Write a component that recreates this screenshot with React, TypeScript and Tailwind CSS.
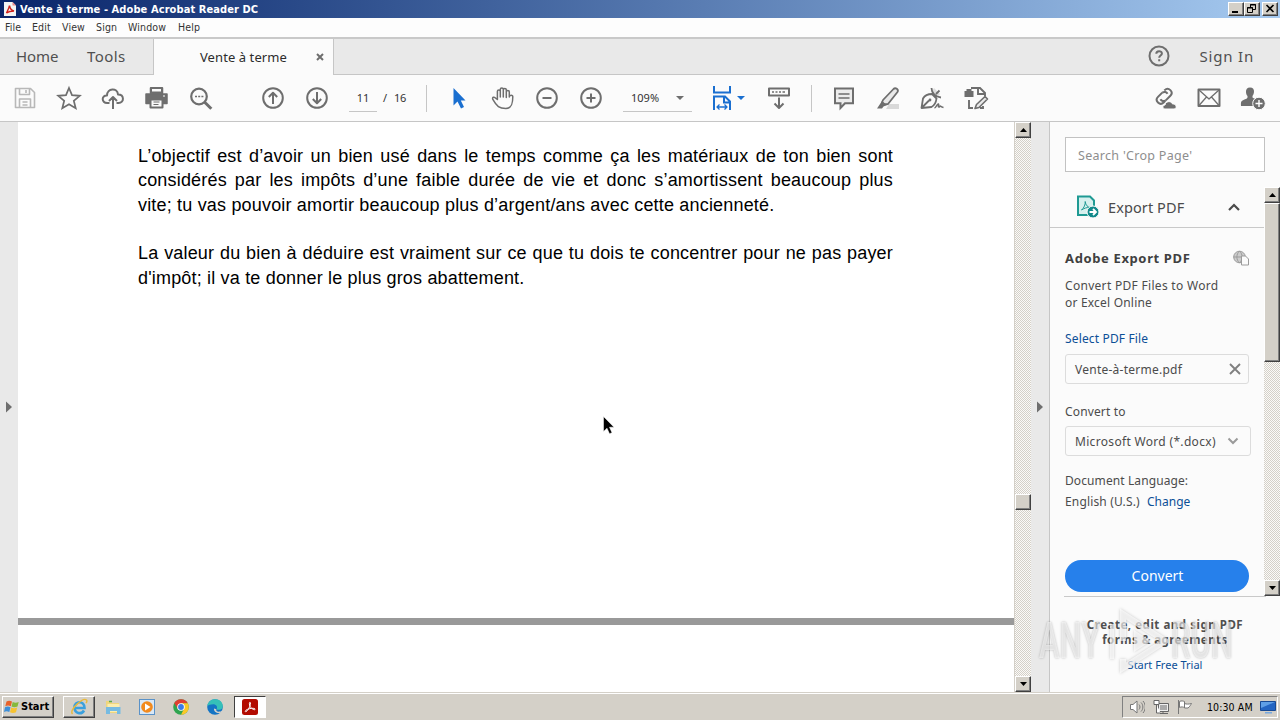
import type { ReactNode } from "react";
import clsx from "clsx";

const MENU_ITEMS = [
    { label: "File", className: "w-[27px]" },
    { label: "Edit", className: "w-[30px]" },
    { label: "View", className: "w-[34px]" },
    { label: "Sign", className: "w-[32px]" },
    { label: "Window", className: "w-[50px]" },
    { label: "Help", className: "w-[40px]" },
];

const PARAGRAPHS = [
    [
        "L’objectif est d’avoir un bien usé dans le temps comme ça les matériaux de ton bien sont",
        "considérés par les impôts d’une faible durée de vie et donc s’amortissent beaucoup plus",
        "vite; tu vas pouvoir amortir beaucoup plus d’argent/ans avec cette ancienneté.",
    ],
    [
        "La valeur du bien à déduire est vraiment sur ce que tu dois te concentrer pour ne pas payer",
        "d'impôt; il va te donner le plus gros abattement.",
    ],
];

const RAISED = "border border-t-white border-l-white border-r-[#404040] border-b-[#404040] bg-[#d4d0c8] shadow-[inset_-1px_-1px_0_#808080]";
const HATCH = "bg-[repeating-conic-gradient(#d4d0c8_0_25%,#fbfaf8_0_50%)] bg-[length:2px_2px]";

interface IconProps {
    children: ReactNode;
    className?: string;
}

/* 28x28 toolbar glyph, centred in its 44px slot */
const Icon = ({ children, className }: IconProps) => (
    <svg
        viewBox="0 0 28 28"
        className={clsx("h-7 w-7 shrink-0", className ?? "text-[#6e6e6e]")}
        fill="none"
        stroke="currentColor"
        strokeWidth="2"
        strokeLinejoin="round"
    >
        {children}
    </svg>
);

const ToolButton = ({ children, className }: IconProps) => (
    <button className="flex w-11 shrink-0 items-center justify-center">
        <Icon className={className}>{children}</Icon>
    </button>
);

const Caret = ({ className }: { className?: string }) => (
    <svg viewBox="0 0 8 4" className={clsx("h-1 w-2 shrink-0", className)}>
        <path d="M0 0h8L4 4z" fill="currentColor" />
    </svg>
);

const AcrobatLogo = ({ className }: { className?: string }) => (
    <svg viewBox="0 0 16 16" className={className}>
        <rect width="16" height="16" rx="2.5" fill="#b30b00" />
        <path
            d="M3.200 12.300c.4-1.500 3.400-2.600 6-2.900 2.300-.3 4.300.1 3.900 1-.5 1-3-.3-4.500-2.200C7.200 6.400 7 3.400 7.900 3.300c1.100-.1.600 3-.9 5.800-1.300 2.500-3.500 4.600-3.800 3.200z"
            fill="none"
            stroke="#fff"
            strokeWidth="1"
        />
    </svg>
);

const TitleBar = () => (
    <header className="flex h-[18px] shrink-0 items-center bg-linear-to-r from-[#0a246a] to-[#a6caf0] pr-[2px] pl-[4px]">
        <svg viewBox="0 0 12 14" className="h-[14px] w-3">
            <path d="M0 0h8.500L12 3.500V14H0z" fill="#f4f4f4" />
            <path d="M8.500 0v3.500H12z" fill="#e88" />
            <path d="M2.500 11c1-2 2.500-4.500 3-7.500C6 6.500 7.500 8.500 10 9 7 9 4.500 9.500 2.500 11z" fill="none" stroke="#d0201a" strokeWidth="1.500" />
        </svg>
        <h1 className="ml-[4px] flex-1 pt-px font-['DejaVu_Sans_Condensed','DejaVu_Sans',sans-serif] text-[11px] leading-[17px] font-bold tracking-[0.09px] whitespace-nowrap text-white">
            Vente à terme - Adobe Acrobat Reader DC
        </h1>
        <div className="flex h-[14px]">
            <button className={clsx("h-[14px] w-4", RAISED)}>
                <svg viewBox="0 0 14 12" className="h-3 w-[14px]">
                    <path d="M3 8h6v2H3z" />
                </svg>
            </button>
            <button className={clsx("h-[14px] w-4", RAISED)}>
                <svg viewBox="0 0 14 12" className="h-3 w-[14px]" fill="none" stroke="#000">
                    <path d="M5.500 4V1.500h5v5H8M5 2h6M2.500 4.500h5v5h-5zM2 5h6" />
                </svg>
            </button>
            <button className={clsx("ml-[2px] h-[14px] w-4", RAISED)}>
                <svg viewBox="0 0 14 12" className="h-3 w-[14px]">
                    <path d="M3.500 2l7 7M10.500 2l-7 7" stroke="#000" strokeWidth="1.600" />
                </svg>
            </button>
        </div>
    </header>
);

const MenuBar = () => (
    <nav className="flex h-[21px] shrink-0 items-center border-b-2 border-[#c9c9c9] bg-[#fdfdfd] pt-px pl-[5px] font-['DejaVu_Sans_Condensed','DejaVu_Sans',sans-serif] text-[10.500px] tracking-[0.15px] text-[#333]">
        {MENU_ITEMS.map((item) => (
            <span key={item.label} className={clsx("shrink-0 whitespace-nowrap", item.className)}>
                {item.label}
            </span>
        ))}
    </nav>
);

const TabBar = () => (
    <div className="flex h-9 shrink-0 font-['Noto_Sans',sans-serif] text-[#505050]">
        <div className="flex w-[154px] items-center border-r border-b border-[#c6c6c6] bg-[#e9e9e9] pl-4 text-[15px]">
            <span className="w-[71px] tracking-[-0.1px]">Home</span>
            <span className="tracking-[0.4px]">Tools</span>
        </div>
        <div className="flex w-[179px] items-center bg-[#fbfbfb] pt-px pl-[46px] text-[13px] text-[#2c2c2c]">
            <span className="w-[116px] tracking-[0.080px] whitespace-nowrap">Vente à terme</span>
            <svg viewBox="0 0 8 8" className="-mt-px h-2 w-2">
                <path d="M1 1l6 6M7 1L1 7" stroke="#6e6e6e" strokeWidth="2" />
            </svg>
        </div>
        <div className="flex flex-1 items-center justify-end border-b border-l border-[#c6c6c6] bg-[#e9e9e9] pr-[26px]">
            <Icon className="-mt-[2px] text-[#6e6e6e]">
                <circle cx="14" cy="14" r="9.500" />
                <path d="M11.300 11.800c0-3.600 5.600-3.400 5.600-.3 0 2-2.700 2.200-2.700 4.300M14.200 17.300v2" />
            </Icon>
            <span className="ml-[27px] text-[15px] tracking-[0.8px] whitespace-nowrap">Sign In</span>
        </div>
    </div>
);

const Toolbar = () => (
    <div className="flex h-[47px] shrink-0 items-center border-b border-[#c6c6c6] bg-[#fbfbfb] pl-[3px] font-['Noto_Sans',sans-serif] text-[11px] text-[#333]">
        <ToolButton className="text-[#b8b8b8]">
            <path d="M4.500 4.500h15l4 4v15h-19zM8.500 4.500v6h10v-6M8.500 23v-8h11v8M15 6v3M11.500 18h5M11.500 21h5" strokeWidth="1.600" />
        </ToolButton>
        <ToolButton>
            <path d="M14 4l3 7.200 7.800.6-6 5 1.900 7.500L14 20.200l-6.700 4.100 1.900-7.500-6-5 7.800-.6z" strokeWidth="1.700" strokeLinejoin="miter" />
        </ToolButton>
        <ToolButton>
            <path d="M10.500 19H8.200C2 19 2.500 11 8 11.500 8 4 18.500 3.500 19 10.500c6.500 0 6.500 8.500.5 8.500h-2M14 25V13M10 17l4-4 4 4" />
        </ToolButton>
        <ToolButton>
            <g transform="translate(-1 -.5)">
                <path d="M8.500 4.500h12v5h-12zM4 10.500h21V20h-4v-3H8v3H4z" fill="currentColor" strokeWidth="1.500" />
                <path d="M9 4.500h11V9H9z" fill="#fbfbfb" />
                <path d="M8.500 16h12v8h-12z" fill="#fbfbfb" />
                <path d="M11.500 18.500h6M11.500 21h5" strokeWidth="1.200" />
                <path d="M21 12.500h2" stroke="#fff" strokeWidth="1" />
            </g>
        </ToolButton>
        <ToolButton>
            <circle cx="12" cy="12.500" r="7.800" strokeWidth="2.200" />
            <path d="M17.700 18.200l6.600 6.600" strokeWidth="3" />
            <path d="M8 12.500h2M11.200 12.500h2M14.400 12.500h2" strokeWidth="1.500" />
        </ToolButton>
        <div className="ml-[28px] flex">
            <ToolButton>
                <circle cx="14" cy="14" r="9.800" />
                <path d="M14 20V9M9.800 13L14 8.800l4.200 4.200" />
            </ToolButton>
            <ToolButton>
                <circle cx="14" cy="14" r="9.800" />
                <path d="M14 8v11M9.800 15l4.200 4.200 4.200-4.200" />
            </ToolButton>
        </div>
        <div className="ml-[10px] flex h-[27px] w-[28px] items-center justify-center border-b border-[#c6c6c6] pt-px">11</div>
        <span className="ml-[6px] w-[9px]">/</span>
        <span className="w-[34px] pl-[2px] tracking-[-0.2px]">16</span>
        <div className="h-[27px] w-px bg-[#c6c6c6]" />
        <div className="ml-[10px] flex">
            <ToolButton className="text-[#1a6fd0]">
                <path d="M8.500 4v17.500l4-4 3.500 7 3-1.500-3.200-6.500h4.700z" fill="currentColor" stroke="none" />
            </ToolButton>
            <ToolButton>
                <path
                    d="M8.700 15.500V7.300c0-1.900 2.900-1.900 2.900 0V13 5.300c0-1.900 3-1.900 3 0V13 5.800c0-1.900 3-1.900 3 0V13.500 8c0-1.900 3-1.900 3 0V13c.2-2.200 3.500-2.400 3.500-.2 0 4.700-.2 11.700-7 11.700-6.500 0-9-2-12.800-8.800-1.400-2.500 1.300-3.500 2.900-1.300z"
                    strokeWidth="1.500"
                    transform="translate(-.3 0)"
                />
            </ToolButton>
            <ToolButton>
                <circle cx="14" cy="14" r="9.800" />
                <path d="M9.500 14h9" />
            </ToolButton>
            <ToolButton>
                <circle cx="14" cy="14" r="9.800" />
                <path d="M9.500 14h9M14 9.500v9" />
            </ToolButton>
        </div>
        <div className="ml-[10px] flex h-[27px] w-[69px] items-center justify-between border-b border-[#c6c6c6] pt-px pr-[8px] pl-[8px] text-[#333]">
            <span>109%</span>
            <Caret className="text-[#6e6e6e]" />
        </div>
        <div className="ml-[16px] flex items-center text-[#1a6fd0]">
            <Icon className="text-[#1a6fd0]">
                <path d="M6 2v6.500h16V2M6 26V12.500h11l5 5V26M16 13v5.500h5.500" strokeLinejoin="miter" />
                <path d="M9 23h10M11.500 20.500L9 23l2.500 2.500M16.500 20.500L19 23l-2.500 2.500" strokeWidth="1.300" />
            </Icon>
            <Caret className="ml-px" />
        </div>
        <div className="ml-[12px] flex">
            <ToolButton>
                <path d="M4 4.500h20v7H4z" />
                <path d="M7 8h2M10.500 8h2M14 8h2M17.500 8h2.500" strokeWidth="1.700" />
                <path d="M14 13.500V24M9.500 19.500l4.500 4.500 4.500-4.500" />
            </ToolButton>
        </div>
        <div className="ml-[10px] h-[27px] w-px bg-[#c6c6c6]" />
        <div className="ml-[10px] flex">
            <ToolButton>
                <path d="M5 4.500h18v14.700h-8L10.500 24v-4.800H5z" fill="#ececec" strokeLinejoin="miter" />
                <path d="M8.500 10h11M8.500 14h11" strokeWidth="1.500" />
            </ToolButton>
            <ToolButton>
                <path d="M15 20h10v5H12z" fill="#d9d9d9" stroke="none" />
                <path d="M9 16L19.500 5c2-2 5.500.5 4 3L14 20l-4 .5-2-2z" fill="#e9e9e9" strokeWidth="1.800" />
                <path d="M8 17l5 4-3.500 1.500-1.500 2H3z" fill="currentColor" stroke="none" />
            </ToolButton>
            <ToolButton>
                <path d="M16 4l6 6-1.500 2-2.500-.5-4-4z" fill="#ddd" stroke="none" />
                <path
                    d="M3.500 24l1.500-9.500c2-3.500 5.500-4.500 9-4.500l4.500 4.500c-.5 4-2 7-5 8.500zM4 23.500l7-7M13.500 4c0 5 4 9 9.500 9.500M18 10l3.500-3.500"
                    strokeWidth="1.800"
                />
                <circle cx="12" cy="16" r="1.400" fill="currentColor" stroke="none" />
                <path d="M16.500 24c2-.5 2.500-4.500 4-4 .8.500-.8 3 .2 3 1.200 0 1.300-1.500 2-.7.500.7 1.300.9 2.800 1.200" strokeWidth="1.500" />
            </ToolButton>
            <ToolButton>
                <path d="M9 4h9l5 5v3M16 4v6h7M7 16v8h4M21 22v2h-3" strokeWidth="1.900" strokeLinejoin="miter" />
                <path d="M2.500 7h9v6h-9zM4.500 5h5v2h-5z" fill="currentColor" stroke="none" />
                <path d="M14.500 20.500l8.500-8 2.500 2.500-8.500 8.500-4 1z" fill="#e9e9e9" strokeWidth="1.600" />
            </ToolButton>
        </div>
        <div className="ml-auto flex pr-[5px]">
            <ToolButton>
                <g transform="translate(13 12.500) rotate(-45)">
                    <path d="M1.500-4h-6c-5.300 0-5.300 8 0 8h2M-1.500 4h6.500c5.300 0 5.300-8 0-8H4.500" />
                    <path d="M1.500-4c2.500.6 3.500 2.500 3 4.500M-1.500 4c-2.500-.6-3.500-2.500-3-4.500" />
                </g>
                <path d="M14 25c-2.500 0-3-4 0-4 .5-4 6.500-4.500 7.500-1 4-.5 5 5 1.500 5z" fill="currentColor" stroke="#fbfbfb" strokeWidth="1" />
            </ToolButton>
            <ToolButton>
                <path d="M3.500 5.500h21v16.500h-21z" />
                <path d="M4 6l10 9L24 6M4 21.500l7.500-8.500M24 21.500L16.500 13" strokeWidth="1.300" />
            </ToolButton>
            <ToolButton>
                <path d="M11 3.500c3 0 4.300 2 4 4.500-.2 2-1 3.200-1.500 4v1.500c1.200 1 4 1.300 4.500 3l-4 5.500H2c0-3-.5-4.500 2-5.800 2-1 4-1.200 4.500-2.700V12C7.500 11 7 9.500 7 8c-.2-2.500 1.200-4.500 4-4.500z" fill="currentColor" stroke="none" />
                <circle cx="20" cy="19.500" r="6.300" fill="currentColor" stroke="#fbfbfb" strokeWidth="1" />
                <path d="M16.500 19.500h7M20 16v7" stroke="#fff" strokeWidth="1.400" />
            </ToolButton>
        </div>
    </div>
);

const ArrowButton = ({ up }: { up?: boolean }) => (
    <button className={clsx("flex h-4 w-4 shrink-0 items-center justify-center", RAISED)}>
        <svg viewBox="0 0 7 4" className={clsx("h-1 w-[7px]", !up && "rotate-180")}>
            <path d="M0 4h7L3.500 0z" />
        </svg>
    </button>
);

const SidePanel = () => (
    <aside className="flex w-[231px] shrink-0 flex-col border-l border-[#c6c6c6] bg-[#fbfbfb] font-['Noto_Sans',sans-serif] text-[12px] text-[#4b4b4b]">
        <div className="mt-[15px] ml-[15px] flex h-[35px] w-[200px] items-center border border-[#c2c2c2] bg-white pt-[3px] pl-[12px] text-[12.500px] text-[#8e8e8e]">
            <span className="tracking-[0.3px] whitespace-nowrap">Search 'Crop Page'</span>
        </div>
        <div className="mt-[15px] flex h-[409px]">
            <div className="flex w-[214px] flex-col">
                <div className="flex h-[41px] items-center border-b border-[#c9c9c9] pl-[26px]">
                    <svg viewBox="0 0 24 24" className="h-6 w-6" fill="none">
                        <path d="M2 1.500h12l4 4V20H2z" fill="#d6f0ee" stroke="#1f9a93" strokeWidth="2" />
                        <path d="M5.500 15c2.500-2 4-5.500 3.700-8.500.5 4 2.500 5.500 5 6-3.500-.3-6 .8-8.700 2.500z" stroke="#1f9a93" />
                        <circle cx="17" cy="17" r="6" fill="#11898a" stroke="#fbfbfb" />
                        <path d="M13.500 17h6M17 14l3 3-3 3" stroke="#fff" strokeWidth="1.800" />
                    </svg>
                    <h2 className="ml-[8px] flex-1 pt-px text-[14.500px] tracking-[0.1px] whitespace-nowrap">Export PDF</h2>
                    <svg viewBox="0 0 12 8" className="mr-[24px] h-2 w-3" fill="none">
                        <path d="M1 7l5-5 5 5" stroke="#4b4b4b" strokeWidth="2.200" />
                    </svg>
                </div>
                <div className="flex flex-1 flex-col pl-[15px]">
                    <div className="mt-[20px] flex h-5 items-center justify-between pr-[14px]">
                        <h3 className="pt-px text-[13px] font-bold tracking-[0.63px] whitespace-nowrap text-[#404040]">Adobe Export PDF</h3>
                        <svg viewBox="0 0 18 16" className="h-4 w-[18px]" fill="none" stroke="#9b9b9b">
                            <circle cx="7.500" cy="7" r="5.800" fill="#ccc" />
                            <path d="M1.500 7h12M7.500 1.200C4 4 4 10 7.500 12.800M7.500 1.200C11 4 11 10 7.500 12.800" />
                            <path d="M9.500 6h4l3 3v6h-7z" fill="#fbfbfb" />
                        </svg>
                    </div>
                    <p className="mt-[9px] text-[12px] leading-[17px] tracking-[0.3px] whitespace-nowrap">
                        Convert PDF Files to Word
                        <br />
                        <span className="tracking-[0.2px]">or Excel Online</span>
                    </p>
                    <a className="mt-[19px] leading-[17px] tracking-[0.15px] text-[#0c4f97]">Select PDF File</a>
                    <div className="mt-[7px] flex h-[30px] w-[184px] items-center justify-between rounded-[3px] border border-[#dcdcdc] pr-[7px] pl-[9px]">
                        <span className="pt-px tracking-[0.25px] whitespace-nowrap">Vente-à-terme.pdf</span>
                        <svg viewBox="0 0 12 12" className="h-3 w-3">
                            <path d="M1 1l10 10M11 1L1 11" stroke="#808080" strokeWidth="1.900" />
                        </svg>
                    </div>
                    <span className="mt-[19px] leading-[17px] tracking-[0.15px]">Convert to</span>
                    <div className="mt-[6px] flex h-[30px] w-[186px] items-center justify-between rounded-[3px] border border-[#dcdcdc] pr-[11px] pl-[9px]">
                        <span className="pt-[2px] tracking-[0.32px] whitespace-nowrap">Microsoft Word (*.docx)</span>
                        <svg viewBox="0 0 12 8" className="h-2 w-3" fill="none">
                            <path d="M1.500 1.500L6 6l4.500-4.500" stroke="#9a9a9a" strokeWidth="2" />
                        </svg>
                    </div>
                    <span className="mt-[16px] leading-[17px] tracking-[0.1px]">Document Language:</span>
                    <div className="mt-[4px] flex leading-[17px] whitespace-nowrap">
                        <span className="w-[82px] tracking-[0.15px]">English (U.S.)</span>
                        <a className="text-[#0c4f97]">Change</a>
                    </div>
                    <button className="mt-[50px] h-8 w-[184px] rounded-full bg-[#2680eb] pb-[2px] pl-px text-[14px] text-white">Convert</button>
                </div>
            </div>
            <div className={clsx("flex w-4 flex-col", HATCH)}>
                <ArrowButton up />
                <div className={clsx("h-[159px] w-4", RAISED)} />
                <div className="flex-1" />
                <ArrowButton />
            </div>
        </div>
        <div className="ml-[14px] flex w-[202px] flex-col items-center border-t border-[#c9c9c9] pt-[20px]">
            <p className="text-center text-[11.500px] leading-[15px] font-bold tracking-[0.53px] whitespace-nowrap text-[#505050]">
                Create, edit and sign PDF
                <br />
                <span className="tracking-[0.45px]">forms &amp; agreements</span>
            </p>
            <a className="mt-[10px] text-[11px] leading-4 text-[#0c4f97]">Start Free Trial</a>
        </div>
    </aside>
);

const Workspace = () => (
    <main className="flex min-h-0 flex-1 bg-[#e9e9e9]">
        <div className="flex w-[18px] shrink-0 items-center justify-center">
            <svg viewBox="0 0 6 12" className="h-3 w-[6px]">
                <path d="M0 0.500v11L6 6z" fill="#6e6e6e" />
            </svg>
        </div>
        <section className="flex flex-1 flex-col bg-white pt-[22px]">
            <article className="flex h-[474px] flex-col gap-6 pl-[120px] font-['Liberation_Sans',Arial,sans-serif] text-[18px] leading-[24.400px] text-black">
                {PARAGRAPHS.map((lines) => (
                    <div key={lines[0]} className="w-[755px] tracking-[0.18px]">
                        {lines.map((line, index) => (
                            <p key={line} className={clsx("whitespace-nowrap", index < lines.length - 1 && "[text-align-last:justify]")}>
                                {line}
                            </p>
                        ))}
                    </div>
                ))}
            </article>
            <div className="h-[7px] bg-[#999]" />
        </section>
        <div className={clsx("flex w-[17px] shrink-0 flex-col border-l border-[#d4d0c8]", HATCH)}>
            <ArrowButton up />
            <div className="h-[356px]" />
            <div className={clsx("h-4 w-4", RAISED)} />
            <div className="flex-1" />
            <ArrowButton />
        </div>
        <div className="flex w-[18px] shrink-0 items-center justify-center">
            <svg viewBox="0 0 6 12" className="h-3 w-[6px]">
                <path d="M0 0.500v11L6 6z" fill="#6e6e6e" />
            </svg>
        </div>
        <SidePanel />
    </main>
);

const Taskbar = () => (
    <footer className="flex h-7 shrink-0 items-center border-t border-[#d4d0c8] bg-[#d4d0c8] pt-px pr-[2px] pl-[2px] font-['DejaVu_Sans_Condensed','DejaVu_Sans',sans-serif] text-[11px] text-black shadow-[inset_0_1px_0_#fff]">
        <button className={clsx("flex h-[22px] w-[52px] items-center pl-px", RAISED)}>
            <svg viewBox="0 0 16 16" className="h-4 w-4">
                <path d="M2.500 2.500c2-1.200 3.500-1 5.500 0L6.800 7.200c-2-1-3.500-1-5.500 0z" fill="#e8622a" />
                <path d="M8.700 3c2 1 4 .8 6 0l-1.200 4.500c-2 1-4 1-6 .1z" fill="#86b93b" />
                <path d="M1 8.200c2-1 3.500-1 5.500 0L5.300 13c-2-1-3.500-1-5.300 0z" fill="#3d8fd8" />
                <path d="M7.200 8.600c2 1 4 1 6 0L12 13.200c-2 1-4 1-6 0z" fill="#f7c331" />
            </svg>
            <span className="ml-px pt-px font-bold">Start</span>
        </button>
        <div className="ml-[9px] flex items-center">
            <button className={clsx("flex h-[22px] w-8 items-center justify-center", RAISED)}>
                <svg viewBox="0 0 18 18" className="h-[18px] w-[18px]" fill="none">
                    <path d="M14 12.500c-2.500 4.500-9.500 3-9.500-3 0-7 10-7 10 .5H5" stroke="#3aa0de" strokeWidth="2.600" />
                    <path d="M2.500 16C-1 12 13-1 16.500 2c.8.800.3 2-.5 3" stroke="#e9b93a" strokeWidth="1.400" />
                </svg>
            </button>
            <svg viewBox="0 0 18 18" className="ml-[9px] h-[18px] w-[18px]">
                <path d="M2 3h5l1 2h7v10H2z" fill="#efd67d" />
                <path d="M3.500 6h12v8h-12z" fill="#fbedae" />
                <path d="M2 9h14.500v7H13v-3H6v3H2z" fill="#76bbe2" />
                <path d="M5 3.500h3" stroke="#5ba94e" strokeWidth="1.500" />
            </svg>
            <svg viewBox="0 0 18 18" className="ml-[16px] h-[18px] w-[18px]">
                <rect x="1.500" y="1.500" width="15" height="15" fill="#d9e8f6" stroke="#5a92c8" />
                <circle cx="9" cy="9" r="5.800" fill="#f28a1d" />
                <path d="M7 5.500v7L12.500 9z" fill="#fff" />
            </svg>
            <svg viewBox="0 0 18 18" className="ml-[16px] h-[18px] w-[18px]">
                <circle cx="9" cy="9" r="7.800" fill="#2ea44f" />
                <path d="M2.200 5.100A7.800 7.800 0 0 1 15.800 5.200H9L6 11z" fill="#df3f32" />
                <path d="M15.800 5.200A7.800 7.800 0 0 1 9 16.800L12.200 10.500 9 5.200z" fill="#fbc828" />
                <circle cx="9" cy="9" r="3.800" fill="#fff" />
                <circle cx="9" cy="9" r="2.900" fill="#3a7ce8" />
            </svg>
            <svg viewBox="0 0 18 18" className="ml-[16px] h-[18px] w-[18px]">
                <circle cx="9" cy="9" r="7.800" fill="#1474c4" />
                <path d="M1.300 8C2 2.500 7 .8 10.500 1.300 15 2 17.500 6 16.600 9.500c-.8 2.500-4 2.800-6 1.800 1.500-2.500-.5-5-3.500-5-2.500 0-4.500.7-5.800 1.700z" fill="#35c0b8" />
                <path d="M10.500 11.300c-1.500 1.700 2 3.700 6 1.200l-1 2c-4 1.500-8-.5-7.500-4z" fill="#d4d0c8" />
            </svg>
            <button className="ml-[10px] flex h-[22px] w-8 items-center justify-center border border-t-[#404040] border-r-white border-b-white border-l-[#404040] bg-white">
                <AcrobatLogo className="h-4 w-4" />
            </button>
        </div>
        <div className="ml-auto flex h-[22px] w-[156px] items-center border border-t-[#808080] border-r-white border-b-white border-l-[#808080] pl-[6px]">
            <svg viewBox="0 0 16 16" className="h-4 w-4" fill="none" stroke="#777">
                <path d="M1.500 5.500h2.500l4-3.500v12l-4-3.500H1.500z" fill="#fff" />
                <path d="M10 5.500c1.300 1.500 1.300 3.500 0 5M12 3.500c2.500 2.500 2.500 6.500 0 9M14 2c3 3.500 3 8.500 0 12" />
            </svg>
            <svg viewBox="0 0 16 16" className="ml-[8px] h-4 w-4" fill="none" stroke="#666">
                <path d="M5.500 4.500h10v8h-10zM7 14.500h8M10 12v2" fill="#eee" />
                <path d="M7 6h7v5H7z" fill="#aaa" stroke="none" />
                <path d="M1 1.500h5v4H1zM3.500 5v9h4" fill="#fff" />
            </svg>
            <svg viewBox="0 0 16 16" className="ml-[8px] h-4 w-4" fill="#fff" stroke="#777">
                <path d="M1.500 1v14M2.500 2.500c2-1 3.500-.5 5 0v6c-1.500-.5-3-1-5 0zM7.500 4.500c2 .8 4 .8 7 0-1 1.500-1.500 3-3.500 4.500H7.500z" />
            </svg>
            <span className="ml-[14px] w-[53px] pt-px text-[10.500px] tracking-[0.1px] whitespace-nowrap">10:30 AM</span>
            <svg viewBox="0 0 16 14" className="h-[14px] w-4">
                <path d="M.5 1.500h15v9H.5z" fill="#2465c2" stroke="#184a94" />
                <path d="M1 2h14L1 8z" fill="#5f9fe6" />
                <path d="M5 12h7v1.500H5z" fill="#78a9de" />
            </svg>
        </div>
    </footer>
);

const Watermark = () => (
    <div className="pointer-events-none absolute top-[606px] left-[1039px] h-[70px] w-[196px] font-['Roboto',sans-serif] text-[50px] leading-[70px] font-medium text-white/60 [text-shadow:0_0_3px_rgba(0,0,0,0.28)]">
        <span className="absolute top-0 left-0 origin-left scale-x-[0.62]">ANY</span>
        <svg viewBox="0 0 60 70" className="absolute top-0 left-[69px] h-[70px] w-[60px] drop-shadow-[0_0_1.500px_rgba(0,0,0,0.3)]" fill="none">
            <path d="M15 35V8l42 27-42 27v-9" stroke="#fff" strokeOpacity=".65" strokeWidth="6" />
            <path d="M26 24l17 11-17 11z" fill="#fff" fillOpacity=".65" />
            <path d="M4 18v35" stroke="#fff" strokeOpacity=".65" strokeWidth="4" />
        </svg>
        <span className="absolute top-0 left-[132px] origin-left scale-x-[0.62]">RUN</span>
    </div>
);

const App = () => (
    <div className="relative flex h-[720px] w-[1280px] flex-col overflow-hidden bg-white">
        <TitleBar />
        <MenuBar />
        <TabBar />
        <Toolbar />
        <Workspace />
        <Taskbar />
        <Watermark />
        <svg viewBox="0 0 12 19" className="absolute top-[416px] left-[603px] h-[19px] w-3">
            <path d="M.5.500v15l3.500-3.300 2.500 5.500 2.500-1-2.500-5.500h4.500z" fill="#000" stroke="#fff" strokeWidth=".5" />
        </svg>
    </div>
);

export default App;
